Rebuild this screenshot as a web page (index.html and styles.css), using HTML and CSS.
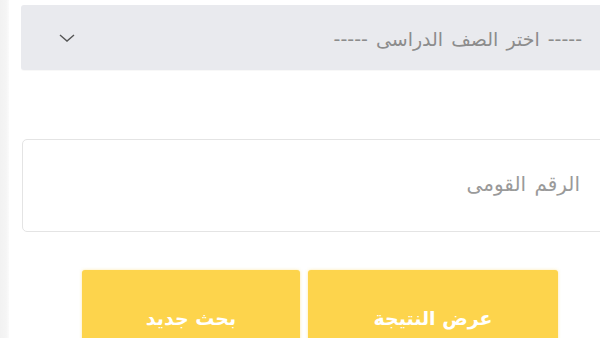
FILE: index.html
```html
<!DOCTYPE html>
<html lang="ar">
<head>
<meta charset="utf-8">
<title>نتيجة</title>
<link rel="stylesheet" href="styles.css">
</head>
<body>
<div class="page">
  <div class="side"></div>
  <main class="card">
    <div class="select">
      <svg class="chev" width="18" height="10" viewBox="0 0 18 10"><path d="M2 2 L9 8 L16 2" fill="none" stroke="#555" stroke-width="1.4"/></svg>
      <span class="select-text" dir="rtl">----- اختر الصف الدراسى -----</span>
    </div>
    <div class="input">
      <span class="input-text" dir="rtl">الرقم القومى</span>
    </div>
    <div class="buttons">
      <div class="btn btn-new" dir="rtl">بحث جديد</div>
      <div class="btn btn-show" dir="rtl">عرض النتيجة</div>
    </div>
  </main>
</div>
</body>
</html>
```
FILE: styles.css
```css
html, body {
  margin: 0;
  padding: 0;
  overflow: hidden;
  background: #ffffff;
}
.page {
  display: flex;
  width: 600px;
  height: 338px;
  overflow: hidden;
  font-family: "DejaVu Sans", "Noto Sans", sans-serif;
}
.side {
  flex: 0 0 9px;
  background: linear-gradient(to right, #f2f2f2, #f5f5f5 70%, #fbfbfb);
}
.card {
  flex: 0 0 611px;
  background: #ffffff;
  padding: 5px 0 0 12px;
  box-sizing: border-box;
  display: flex;
  flex-direction: column;
}
.card > * {
  flex-shrink: 0;
}
.select {
  height: 65px;
  box-sizing: border-box;
  background: #e9eaee;
  border-radius: 3px;
  display: flex;
  align-items: center;
  padding: 0 38px 0 37px;
  box-shadow: 0 1px 1px rgba(0,0,0,0.03);
}
.chev {
  display: block;
  margin-top: 1px;
}
.select-text {
  margin-left: auto;
  font-size: 19px;
  color: #8c8c8c;
  margin-top: 3px;
  word-spacing: 2px;
}
.input {
  margin-top: 69px;
  height: 93px;
  box-sizing: border-box;
  border: 1px solid #e4e4e4;
  border-radius: 5px;
  display: flex;
  align-items: center;
  justify-content: flex-end;
  padding-right: 39px;
  margin-left: 1px;
}
.input-text {
  font-size: 20px;
  color: #9a9a9a;
  margin-top: -4px;
  word-spacing: 2px;
}
.buttons {
  margin-top: 38px;
  margin-left: 61px;
  display: flex;
  gap: 8px;
}
.btn {
  height: 96px;
  background: #fdd44c;
  border-radius: 3px;
  color: #ffffff;
  font-size: 19px;
  font-weight: bold;
  display: flex;
  align-items: center;
  justify-content: center;
  box-shadow: 0 0 3px rgba(253, 212, 76, 0.5);
}
.btn-new {
  width: 218px;
}
.btn-show {
  width: 250px;
}
```
